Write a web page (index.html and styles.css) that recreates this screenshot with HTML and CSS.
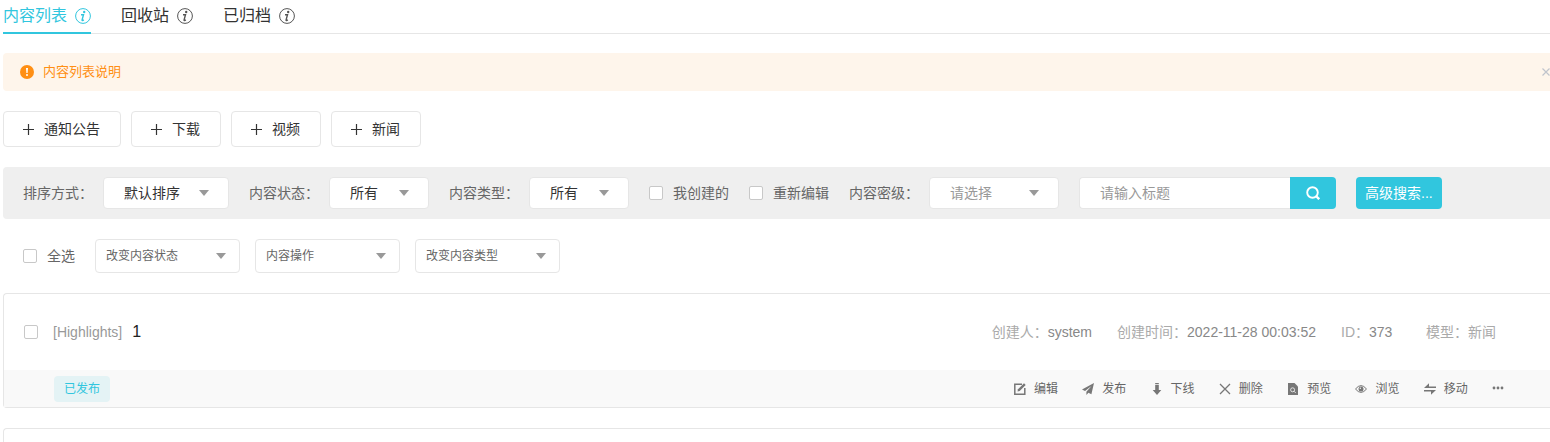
FILE: index.html
```html
<!DOCTYPE html>
<html lang="zh-CN">
<head>
<meta charset="utf-8">
<title>内容列表</title>
<link rel="stylesheet" href="styles.css">
</head>
<body>
<svg class="sprite" aria-hidden="true">
  <symbol id="info" viewBox="0 0 16 16"><circle cx="8" cy="8" r="7.4" fill="none" stroke="currentColor" stroke-width="1"/><circle cx="9.200" cy="4" r="1.200" fill="currentColor"/><path d="M6 6.800h2.500L7.100 11.800q-.2 1 .5.8l1.300-.7" fill="none" stroke="currentColor" stroke-width="1.400"/></symbol>
  <symbol id="plus" viewBox="0 0 11 11"><path d="M0 5.5h11M5.5 0v11" stroke="currentColor" stroke-width="1.2"/></symbol>
  <symbol id="caret" viewBox="0 0 10 6"><path d="M0 0h10L5 6z" fill="currentColor"/></symbol>
</svg>
<main class="page">
  <nav class="tabs">
    <a class="tab tab-active" href="#list">内容列表<svg class="info"><use href="#info"/></svg></a>
    <a class="tab" href="#recycle">回收站<svg class="info"><use href="#info"/></svg></a>
    <a class="tab" href="#archive">已归档<svg class="info"><use href="#info"/></svg></a>
  </nav>

  <div class="notice" role="note">
    <svg class="notice-icon" viewBox="0 0 14 14"><circle cx="7" cy="7" r="7" fill="currentColor"/><path d="M6 3h2l-.4 5H6.400z" fill="#fff"/><circle cx="7" cy="10" r="1" fill="#fff"/></svg>
    <span class="notice-text">内容列表说明</span>
    <button class="notice-close" aria-label="关闭"><svg viewBox="0 0 8 8"><path d="M.5.5l7 7M7.500.5l-7 7" stroke="currentColor" stroke-width="1.2"/></svg></button>
  </div>

  <div class="create-row">
    <button class="create"><svg><use href="#plus"/></svg>通知公告</button>
    <button class="create"><svg><use href="#plus"/></svg>下载</button>
    <button class="create"><svg><use href="#plus"/></svg>视频</button>
    <button class="create"><svg><use href="#plus"/></svg>新闻</button>
  </div>

  <form class="filters">
    <div class="field"><label for="sort">排序方式：</label><span class="select select-sort"><select id="sort"><option>默认排序</option></select><svg><use href="#caret"/></svg></span></div>
    <div class="field"><label for="status">内容状态：</label><span class="select select-short"><select id="status"><option>所有</option></select><svg><use href="#caret"/></svg></span></div>
    <div class="field"><label for="type">内容类型：</label><span class="select select-short"><select id="type"><option>所有</option></select><svg><use href="#caret"/></svg></span></div>
    <label class="check"><input type="checkbox">我创建的</label>
    <label class="check"><input type="checkbox">重新编辑</label>
    <div class="field"><label for="level">内容密级：</label><span class="select select-level"><select id="level"><option>请选择</option></select><svg><use href="#caret"/></svg></span></div>
    <div class="search">
      <input type="text" placeholder="请输入标题" aria-label="标题">
      <button type="button" aria-label="搜索"><svg viewBox="0 0 14 14"><circle cx="6.500" cy="6.500" r="5.300" fill="none" stroke="currentColor" stroke-width="1.900"/><path d="M10 10l3.200 3.200" stroke="currentColor" stroke-width="2.400"/></svg></button>
    </div>
    <button class="advanced" type="button">高级搜索...</button>
  </form>

  <div class="bulk">
    <label class="check"><input type="checkbox">全选</label>
    <div class="bulk-selects">
      <span class="select select-bulk"><select aria-label="改变内容状态"><option>改变内容状态</option></select><svg><use href="#caret"/></svg></span>
      <span class="select select-bulk"><select aria-label="内容操作"><option>内容操作</option></select><svg><use href="#caret"/></svg></span>
      <span class="select select-bulk"><select aria-label="改变内容类型"><option>改变内容类型</option></select><svg><use href="#caret"/></svg></span>
    </div>
  </div>

  <article class="card">
    <div class="card-main">
      <input type="checkbox" aria-label="选择 1">
      <span class="category">[Highlights]</span>
      <a class="title" href="#373">1</a>
      <div class="meta"><span>创建人：<b>system</b></span><span>创建时间：<b>2022-11-28 00:03:52</b></span><span class="meta-id">ID：<b>373</b></span><span>模型：新闻</span></div>
    </div>
    <div class="card-foot">
      <span class="badge">已发布</span>
      <div class="actions">
        <button><svg viewBox="0 0 12 12"><path d="M8 1.200H.8v10h10V5" fill="none" stroke="currentColor" stroke-width="1.500"/><path d="M3.500 8.500l.5-2.200L10 .3l1.700 1.700-6 6z" fill="currentColor"/></svg>编辑</button>
        <button><svg viewBox="0 0 12 12"><path d="M12 0L0 6.500l3 1.600L9.500 3 4.400 8.800V12l2-2.300 3 1.500z" fill="currentColor"/></svg>发布</button>
        <button><svg viewBox="0 0 12 12"><path d="M4.200 0h3.600v1H4.200zM4.200 1.800h3.600V7H10.300L6 12 1.700 7H4.200z" fill="currentColor"/></svg>下线</button>
        <button><svg viewBox="0 0 12 12"><path d="M1 1l10 10M11 1L1 11" stroke="currentColor" stroke-width="1.300"/></svg>删除</button>
        <button><svg viewBox="0 0 12 12"><path d="M1 0h6.500L11 3.500V12H1z" fill="currentColor"/><circle cx="5.600" cy="6.800" r="2" fill="none" stroke="#f9f9f9" stroke-width=".8"/><path d="M7 8.200l1.800 1.800" fill="none" stroke="#f9f9f9" stroke-width=".8"/></svg>预览</button>
        <button><svg viewBox="0 0 12 12"><path d="M.5 6Q6-.8 11.500 6 6 12.800.5 6z" fill="none" stroke="currentColor" stroke-width="1"/><circle cx="6" cy="6" r="2.500" fill="currentColor"/><circle cx="5.300" cy="5.200" r=".7" fill="#f9f9f9"/></svg>浏览</button>
        <button><svg viewBox="0 0 12 12"><path d="M0 5L5 .2v3.300H12V5zM12 7L7 11.800V8.500H0V7z" fill="currentColor"/></svg>移动</button>
        <button aria-label="更多"><svg viewBox="0 0 12 12"><circle cx="2" cy="5" r="1.400"/><circle cx="6" cy="5" r="1.400"/><circle cx="10" cy="5" r="1.400"/></svg></button>
      </div>
    </div>
  </article>
  <article class="card"><div class="card-main"></div></article>
</main>
</body>
</html>
```
FILE: styles.css
```css
* { box-sizing: border-box; }
html { overflow: hidden; }
body {
  margin: 0;
  background: #fff;
  color: #666;
  font: 14px/20px "Liberation Sans", "Noto Sans CJK SC", sans-serif;
}
button, input, select { font: inherit; color: inherit; margin: 0; }
button { border: 0; padding: 0; background: none; cursor: pointer; white-space: nowrap; }
a { color: inherit; text-decoration: none; }
svg { flex: none; display: block; fill: currentColor; }
.sprite { position: absolute; width: 0; height: 0; }
.page { padding-left: 3px; }

.tabs { display: flex; gap: 30px; height: 34px; box-shadow: inset 0 -1px #e6e6e6; }
.tab { display: flex; align-items: center; gap: 8px; font-size: 16px; color: #333; border-bottom: 2px solid transparent; }
.tab-active { color: #31c6de; border-color: #31c6de; }
.info { width: 16px; height: 16px; color: #555; }
.tab-active .info { color: inherit; }

.notice { display: flex; align-items: center; height: 38px; margin-top: 19px; padding-left: 17px; background: #fef5eb; border-radius: 4px 0 0 4px; color: #ff8f14; font-size: 13px; }
.notice-icon { width: 14px; height: 14px; }
.notice-text { margin-left: 9px; }
.notice-close { margin-left: auto; color: #c0c4cc; }
.notice-close svg { width: 8px; height: 8px; }

.create-row { display: flex; gap: 10px; margin-top: 20px; }
.create { display: flex; align-items: center; gap: 10px; height: 36px; padding: 0 20px 0 19px; border: 1px solid #e6e6e6; border-radius: 4px; color: #333; }
.create svg { width: 11px; height: 11px; }

.filters { display: flex; align-items: center; gap: 20px; height: 52px; margin-top: 20px; padding-left: 20px; background: #efefef; border-radius: 4px 0 0 4px; }
.field { display: flex; align-items: center; gap: 10px; white-space: nowrap; }
.check { display: flex; align-items: center; gap: 10px; white-space: nowrap; }
input[type="checkbox"] { appearance: none; flex: none; width: 14px; height: 14px; border: 1px solid #c8c8c8; border-radius: 2px; background: #fff; }
input[type="checkbox"]:checked { background: #31c6de; }

.select { display: grid; align-items: center; height: 32px; }
.select select { grid-area: 1 / 1; appearance: none; width: 100%; height: 100%; padding: 0 20px; border: 1px solid #e6e6e6; border-radius: 4px; background: #fff; color: #333; }
.select svg { grid-area: 1 / 1; justify-self: end; width: 10px; height: 6px; margin-right: 20px; color: #999; pointer-events: none; }
.select-sort { width: 126px; }
.select-short { width: 100px; }
.select-level { width: 130px; }
.select-level select { color: #999; }
.select-bulk { width: 145px; height: 34px; font-size: 12px; }
.select-bulk select { padding: 0 10px; color: #666; }
.select-bulk svg { margin-right: 14px; }

.search { display: flex; height: 32px; }
.search input { width: 211px; padding: 0 20px; border: 1px solid #e6e6e6; border-right: 0; border-radius: 4px 0 0 4px; background: #fff; color: #333; }
.search input::placeholder { color: #999; opacity: 1; }
.search button { display: grid; place-items: center; width: 46px; border-radius: 0 4px 4px 0; background: #31c6de; color: #fff; }
.search svg { width: 14px; height: 14px; }
.advanced { height: 32px; padding: 0 9px; border-radius: 4px; background: #31c6de; color: #fff; }

.bulk { display: flex; align-items: center; gap: 20px; margin-top: 20px; padding-left: 20px; }
.bulk-selects { display: flex; gap: 15px; }

.card { margin-top: 20px; border: 1px solid #e6e6e6; border-right: 0; border-radius: 4px 0 0 4px; }
.card-main { display: flex; align-items: center; height: 76px; padding: 0 54px 0 20px; color: #999; }
.category { margin-left: 15px; }
.title { margin-left: 10px; color: #222; font-size: 16px; }
.meta { display: flex; gap: 25px; margin-left: auto; color: #aaa; }
.meta b { font-weight: 400; color: #888; }
.meta-id { min-width: 60px; }
.card-foot { display: flex; align-items: center; justify-content: space-between; height: 37px; padding: 0 46px 0 50px; background: #f9f9f9; font-size: 12px; }
.badge { padding: 3px 10px; border-radius: 4px; background: #e4f3f5; color: #31c6de; }
.actions { display: flex; justify-content: space-between; width: 490px; }
.actions button { display: flex; align-items: center; gap: 8px; }
.actions svg { width: 12px; height: 12px; color: #777; }
```
